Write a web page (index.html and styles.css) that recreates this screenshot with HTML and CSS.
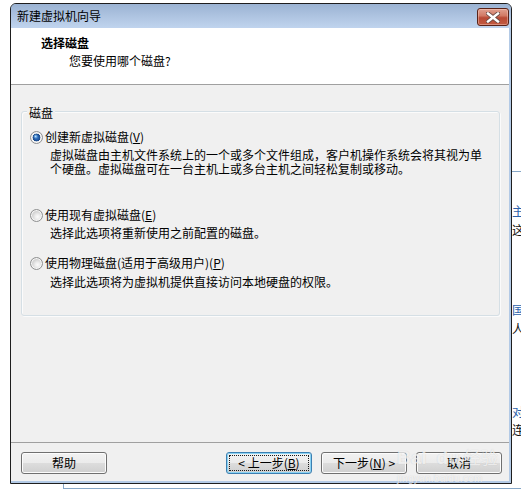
FILE: index.html
```html
<!DOCTYPE html>
<html lang="zh-CN">
<head>
<meta charset="utf-8">
<title>新建虚拟机向导</title>
<link rel="stylesheet" href="styles.css">
</head>
<body>
<div class="desktop">
  <div class="window">
    <div class="titlebar">
      <span class="title">新建虚拟机向导</span>
      <div class="close" role="button" aria-label="关闭">
        <svg width="14" height="11" viewBox="0 0 14 11">
          <path d="M2 1.5 L12 9.5 M12 1.5 L2 9.5" stroke="#6b4a44" stroke-width="4.2" stroke-linecap="square"/>
          <path d="M2 1.5 L12 9.5 M12 1.5 L2 9.5" stroke="#ffffff" stroke-width="2.4" stroke-linecap="square"/>
        </svg>
      </div>
    </div>
    <div class="client">
      <div class="header">
        <div class="h-title">选择磁盘</div>
        <div class="h-sub">您要使用哪个磁盘?</div>
      </div>
      <div class="content">
        <div class="group">
          <div class="legend">磁盘</div>
          <div class="option opt-1">
            <div class="opt-row"><span class="radio checked"></span><span>创建新虚拟磁盘(<u>V</u>)</span></div>
            <div class="opt-desc">虚拟磁盘由主机文件系统上的一个或多个文件组成，客户机操作系统会将其视为单个硬盘。虚拟磁盘可在一台主机上或多台主机之间轻松复制或移动。</div>
          </div>
          <div class="option opt-2">
            <div class="opt-row"><span class="radio"></span><span>使用现有虚拟磁盘(<u>E</u>)</span></div>
            <div class="opt-desc">选择此选项将重新使用之前配置的磁盘。</div>
          </div>
          <div class="option opt-3">
            <div class="opt-row"><span class="radio"></span><span>使用物理磁盘(适用于高级用户)(<u>P</u>)</span></div>
            <div class="opt-desc">选择此选项将为虚拟机提供直接访问本地硬盘的权限。</div>
          </div>
        </div>
      </div>
      <div class="footer">
        <div class="btn"><span class="btn-in">帮助</span></div>
        <div class="btn default push"><span class="btn-in">&lt; 上一步(<u>B</u>)</span></div>
        <div class="btn"><span class="btn-in">下一步(<u>N</u>) &gt;</span></div>
        <div class="btn"><span class="btn-in">取消</span></div>
        <div class="watermark" aria-hidden="true">
          <div class="wm-logo">Bai<span class="wm-du">du</span><span class="wm-cn">经验</span></div>
          <div class="wm-url">jingyan.baidu.com</div>
        </div>
      </div>
    </div>
  </div>
  <div class="aside">
    <div class="aside-rule"></div>
    <div class="a-blue a1">主持</div>
    <div class="a-black a2">这是</div>
    <div class="a-blue a3">国家</div>
    <div class="a-black a4">人口</div>
    <div class="a-blue a5">对付</div>
    <div class="a-black a6">连接</div>
  </div>
</div>
<div class="edge"></div>
</body>
</html>
```
FILE: styles.css
```css
html, body {
  margin: 0;
  padding: 0;
}
body {
  background: #ffffff;
  font-family: "Noto Sans CJK SC", "Noto Sans", sans-serif;
  font-size: 12px;
  color: #000;
  overflow: hidden;
}
*, *::before, *::after { box-sizing: border-box; }

.desktop {
  display: flex;
  align-items: flex-start;
}

.window {
  margin: 3px 0 0 10px;
  width: 502px;
  border: 1px solid #1e1e1e;
  border-radius: 6px 6px 0 0;
  background: #b3cae6;
  flex: none;
}

.titlebar {
  height: 24px;
  display: flex;
  align-items: flex-start;
  background: linear-gradient(#9bb3d3, #c0d4ee);
  border-radius: 5px 5px 0 0;
}
.title {
  flex: 1;
  padding-left: 6px;
  line-height: 24px;
}
.close {
  margin: 4px 2px 0 0;
  width: 32px;
  height: 18px;
  border: 1px solid #5a2318;
  border-radius: 3px;
  background: linear-gradient(#e0a090 0%, #d27a65 42%, #b94a35 55%, #c25b42 100%);
  box-shadow: inset 0 0 0 1px rgba(255, 220, 210, 0.4);
  display: flex;
  align-items: center;
  justify-content: center;
}

.client {
  margin: 0 2px 2px 0;
  background: #f0f0f0;
}

.header {
  height: 57px;
  background: #fff;
  border-bottom: 1px solid #a0a0a0;
}
.h-title {
  padding: 8px 0 0 30px;
  line-height: 14px;
  font-weight: bold;
}
.h-sub {
  padding: 4px 0 0 58px;
  line-height: 14px;
}

.content {
  height: 358px;
  padding-top: 26px;
  border-bottom: 1px solid #a0a0a0;
}

.group {
  margin-left: 10px;
  width: 479px;
  height: 205px;
  border: 1px solid #d5dfe5;
  border-radius: 3px;
  padding-left: 8px;
  box-shadow: inset 1px 1px 0 #fbfbfb, 1px 1px 0 #fbfbfb;
}
.legend {
  width: max-content;
  margin: -6px 0 0 -3px;
  padding: 0 2px;
  background: #f0f0f0;
  line-height: 14px;
}

.opt-1 { margin-top: 10px; }
.opt-2 { margin-top: 32px; }
.opt-3 { margin-top: 16px; }

.opt-row {
  display: flex;
  align-items: center;
  gap: 2px;
  line-height: 14px;
}
.opt-desc {
  margin-top: 4px;
  padding-left: 20px;
  width: 456px;
  line-height: 14px;
}
.opt-3 .opt-desc { margin-top: 5px; }

.radio {
  flex: none;
  width: 13px;
  height: 13px;
  border-radius: 50%;
  border: 1px solid #8f9091;
  background: radial-gradient(circle at 60% 62%, #fbfbfb 0, #ececec 2.5px, #d2d2d2 5.5px);
  box-shadow: inset 0 0 0 1px #f6f6f6;
}
.radio.checked {
  background:
    radial-gradient(circle at 42% 40%, rgba(215, 240, 255, 0.95) 0, rgba(130, 195, 245, 0.6) 1.2px, rgba(130, 195, 245, 0) 2.4px),
    radial-gradient(circle, #3f7ec7 0, #2159a6 2.6px, #1d4a85 3.6px, #f2f2f2 4.2px, #dcdcdc 5.5px);
}

.footer {
  position: relative;
  height: 38px;
  display: flex;
  align-items: flex-start;
  gap: 9px;
  padding: 9px 7px 0 10px;
}
.btn {
  width: 86px;
  height: 22px;
  flex: none;
  display: flex;
  padding: 2px;
  border: 1px solid #707070;
  border-radius: 3px;
  background: linear-gradient(#f2f2f2 0%, #ebebeb 50%, #dddddd 50%, #cfcfcf 100%);
  box-shadow: inset 0 0 0 1px #fcfcfc;
}
.btn.push { margin-left: auto; }
.btn.default {
  border-color: #3c7fb1;
  box-shadow: inset 0 0 0 1px #8ad3f4;
}
.btn-in {
  flex: 1;
  display: flex;
  align-items: center;
  justify-content: center;
  border: 1px dotted transparent;
  line-height: 14px;
  white-space: pre;
}
.btn.default .btn-in { border-color: #1a1a1a; }

.watermark {
  position: absolute;
  left: 386px;
  top: 2px;
  color: rgba(255, 255, 255, 0.7);
  text-shadow: 0 0 1px rgba(120, 120, 120, 0.3);
  font-family: "Liberation Sans", sans-serif;
  pointer-events: none;
}
.wm-logo {
  font-size: 19px;
  font-weight: bold;
  line-height: 24px;
  white-space: nowrap;
}
.wm-du { margin-left: 10px; }
.wm-cn {
  margin-left: 4px;
  font-family: "Noto Sans CJK SC", sans-serif;
  font-size: 17px;
  font-weight: normal;
}
.wm-url {
  margin-top: 4px;
  font-size: 10px;
  line-height: 10px;
  letter-spacing: 0.3px;
}

.aside {
  width: 9px;
  flex: none;
  overflow: hidden;
  white-space: nowrap;
  font-size: 12px;
  line-height: 14px;
}
.aside-rule {
  margin-top: 171px;
  height: 1px;
  width: 9px;
  background: #86a7c7;
}
.a-blue { color: #2d62ab; }
.a-black { color: #111; }
.a1 { margin-top: 32px; }
.a2 { margin-top: 5px; }
.a3 { margin-top: 66px; }
.a4 { margin-top: 5px; }
.a5 { margin-top: 69px; }
.a6 { margin-top: 4px; }

.edge {
  margin-left: 63px;
  height: 5px;
  border-left: 1px solid #86a7c7;
  border-bottom: 1px solid #86a7c7;
}
```
